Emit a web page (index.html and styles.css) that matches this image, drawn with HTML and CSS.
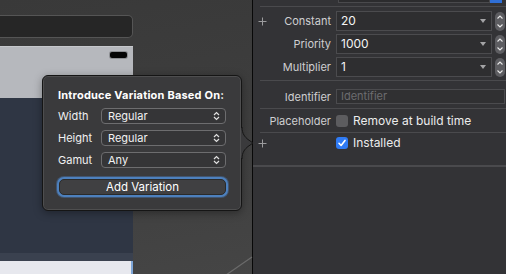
FILE: index.html
```html
<!DOCTYPE html>
<html lang="en">
<head>
    <meta charset="UTF-8">
    <title>Constraint Inspector</title>
    <link rel="stylesheet" href="styles.css">
</head>
<body>
    <div class="canvas">
        <div class="toolbar"></div>
        <div class="device">
            <div class="device-top">
                <div class="battery"></div>
            </div>
            <div class="device-body"></div>
            <div class="device-strip"></div>
            <div class="device-bottom"></div>
        </div>

        <svg class="guide" width="30" height="20" viewBox="0 0 30 20">
            <line x1="2" y1="19" x2="28" y2="1" stroke="#6b6b6b" stroke-width="1.2"/>
        </svg>

        <div class="popover">
            <div class="popover-title">Introduce Variation Based On:</div>
            <div class="variation-row">
                <span class="variation-label">Width</span>
                <div class="popup">Regular
                    <svg class="updown" width="7" height="10" viewBox="0 0 7 10"><polyline points="1,4 3.5,1.5 6,4" /><polyline points="1,6 3.5,8.5 6,6" /></svg>
                </div>
            </div>
            <div class="variation-row">
                <span class="variation-label">Height</span>
                <div class="popup">Regular
                    <svg class="updown" width="7" height="10" viewBox="0 0 7 10"><polyline points="1,4 3.5,1.5 6,4" /><polyline points="1,6 3.5,8.5 6,6" /></svg>
                </div>
            </div>
            <div class="variation-row">
                <span class="variation-label">Gamut</span>
                <div class="popup">Any
                    <svg class="updown" width="7" height="10" viewBox="0 0 7 10"><polyline points="1,4 3.5,1.5 6,4" /><polyline points="1,6 3.5,8.5 6,6" /></svg>
                </div>
            </div>
            <div class="add-btn">Add Variation</div>

            <svg class="arrow" width="14" height="32" viewBox="0 0 14 32">
                <rect x="0" y="1" width="1.6" height="30" fill="#3a3a3c"/>
                <path d="M1 0 C1 7 4 10 7 12.5 L12 16 L7 19.5 C4 22 1 25 1 32" fill="#3a3a3c" stroke="#151515" stroke-width="1"/>
            </svg>
        </div>
    </div>

    <div class="divider"></div>

    <div class="inspector">
        <div class="stub"><div class="stub-field"></div><div class="stub-blue"></div></div>
        <div class="sep"></div>

        <div class="group group-values">
            <div class="row">
                <div class="label"><svg class="plus" width="9" height="9" viewBox="0 0 9 9"><path d="M4.5 0.5 V8.5 M0.5 4.5 H8.5"/></svg>Constant</div>
                <div class="combo">20<span class="tri"></span></div>
                <div class="stepper">
                    <svg width="10" height="19" viewBox="0 0 10 19"><polyline points="2.5,6.5 5,4 7.5,6.5"/><polyline points="2.5,12.5 5,15 7.5,12.5"/></svg>
                </div>
            </div>
            <div class="row">
                <div class="label">Priority</div>
                <div class="combo">1000<span class="tri"></span></div>
                <div class="stepper">
                    <svg width="10" height="19" viewBox="0 0 10 19"><polyline points="2.5,6.5 5,4 7.5,6.5"/><polyline points="2.5,12.5 5,15 7.5,12.5"/></svg>
                </div>
            </div>
            <div class="row">
                <div class="label">Multiplier</div>
                <div class="combo">1<span class="tri"></span></div>
                <div class="stepper">
                    <svg width="10" height="19" viewBox="0 0 10 19"><polyline points="2.5,6.5 5,4 7.5,6.5"/><polyline points="2.5,12.5 5,15 7.5,12.5"/></svg>
                </div>
            </div>
        </div>
        <div class="sep"></div>

        <div class="group group-ident">
            <div class="row">
                <div class="label">Identifier</div>
                <div class="text-field">Identifier</div>
            </div>
        </div>
        <div class="sep"></div>

        <div class="group group-placeholder">
            <div class="row">
                <div class="label">Placeholder</div>
                <span class="checkbox"></span>
                <span class="check-text">Remove at build time</span>
            </div>
        </div>
        <div class="sep"></div>

        <div class="group group-installed">
            <div class="row">
                <div class="label"><svg class="plus" width="9" height="9" viewBox="0 0 9 9"><path d="M4.5 0.5 V8.5 M0.5 4.5 H8.5"/></svg></div>
                <span class="checkbox checked">
                    <svg width="12" height="12" viewBox="0 0 12 12"><path d="M3 6.3 L5.1 8.5 L9 3.4"/></svg>
                </span>
                <span class="check-text">Installed</span>
            </div>
        </div>
        <div class="sep sep-full"></div>
    </div>
</body>
</html>
```

FILE: styles.css
```css
body {
    margin: 0;
    width: 506px;
    height: 274px;
    overflow: hidden;
    display: flex;
    font-family: Inter, "Liberation Sans", sans-serif;
    font-size: 11px;
    color: #e8e8e8;
    background-color: #333336;
}

/* canvas side */

.canvas {
    position: relative;
    width: 252px;
    height: 274px;
    padding-top: 15px;
    box-sizing: border-box;
    background: linear-gradient(170deg, #393939 0%, #3e3e3e 50%, #454545 100%);
}

.toolbar {
    width: 133px;
    height: 23px;
    box-sizing: border-box;
    background-color: #262626;
    border: 1px solid #555;
    border-left: none;
    border-radius: 0 5px 5px 0;
}

.device {
    width: 133px;
    margin-top: 8px;
}

.device-top {
    height: 52px;
    background-color: #b6b8bd;
    border-top: 1px solid #c6c8cc;
    box-sizing: border-box;
    display: flex;
    justify-content: flex-end;
    padding: 5px 6px 0 0;
}

.battery {
    width: 17px;
    height: 6px;
    border-radius: 2px;
    background-color: #050505;
    box-shadow: 0 0 0 1px #8d8f93;
}

.device-body {
    height: 155px;
    background-color: #2f3644;
}

.device-strip {
    height: 8px;
    background-color: #3a414f;
}

.device-bottom {
    height: 13px;
    background-color: #e7e8ee;
    border-right: 2px solid #7ea6d8;
}

.guide {
    position: absolute;
    left: 224px;
    top: 256px;
}

/* popover */

.popover {
    position: absolute;
    left: 42px;
    top: 75px;
    width: 200px;
    height: 136px;
    box-sizing: border-box;
    padding: 12px 15px 0 15px;
    background-color: #3a3a3c;
    border: 1px solid #151515;
    border-radius: 6px;
    box-shadow: inset 0 0 0 1px rgba(255, 255, 255, 0.1), 0 2px 8px rgba(0, 0, 0, 0.35);
}

.popover-title {
    font-weight: 700;
    letter-spacing: 0.2px;
    color: #fff;
    line-height: 14px;
    margin-bottom: 6px;
}

.variation-row {
    display: flex;
    align-items: center;
    height: 16px;
    margin-bottom: 6px;
}

.variation-label {
    width: 43px;
    color: #f0f0f0;
}

.popup {
    position: relative;
    width: 125px;
    height: 16px;
    box-sizing: border-box;
    border: 1px solid #6d6d6f;
    border-radius: 4px;
    background-color: #353537;
    padding-left: 6px;
    line-height: 14px;
    color: #f2f2f2;
}

.updown {
    position: absolute;
    right: 5px;
    top: 2px;
    fill: none;
    stroke: #e0e0e0;
    stroke-width: 1.2;
}

.add-btn {
    width: 167px;
    height: 16px;
    margin: 11px 0 0 1px;
    box-sizing: border-box;
    border: 1px solid #2a2a2a;
    border-radius: 5px;
    background-color: #404042;
    box-shadow: 0 0 0 2px #4d80bd, 0 0 0 3px rgba(77, 128, 189, 0.4);
    text-align: center;
    line-height: 14px;
    font-size: 11.5px;
    color: #fff;
}

.arrow {
    position: absolute;
    left: 198px;
    top: 51px;
}

.divider {
    width: 1px;
    background-color: #080808;
}

/* inspector side */

.inspector {
    flex: 1;
    background-color: #333336;
}

.stub {
    display: flex;
    height: 3px;
    margin-left: 85px;
}

.stub-field {
    width: 152px;
    box-sizing: border-box;
    background-color: #2c2c2e;
    border: 1px solid #4a4a4d;
    border-top: none;
}

.stub-blue {
    width: 12px;
    background-color: #2f6fd6;
}

.sep {
    height: 1px;
    margin-left: 7px;
    margin-top: 3px;
    background-color: #4a4a4d;
}

.sep-full {
    height: 2px;
    margin-left: 0;
}

.group {
    display: flex;
    flex-direction: column;
    gap: 3px;
}

.group + .sep {
    margin-top: 0;
}

.group-values {
    padding: 4px 0 3px;
}

.group-ident {
    padding: 8px 0 4px;
}

.group-placeholder {
    padding: 5px 0 4px;
}

.group-installed {
    padding: 3px 0 15px;
}

.row {
    display: flex;
    align-items: center;
    line-height: 14px;
}

.label {
    width: 78px;
    margin-right: 5px;
    box-sizing: border-box;
    display: flex;
    justify-content: flex-end;
    align-items: center;
    position: relative;
    min-height: 14px;
    color: #cfcfd1;
}

.plus {
    position: absolute;
    left: 5px;
    top: 50%;
    margin-top: -4.5px;
    stroke: #9c9c9e;
    stroke-width: 1;
    fill: none;
}

.combo {
    position: relative;
    width: 156px;
    height: 20px;
    box-sizing: border-box;
    border: 1px solid #4b4b4e;
    background-color: #2e2e30;
    padding-left: 4px;
    line-height: 18px;
    font-size: 12px;
    color: #f4f4f4;
}

.tri {
    position: absolute;
    right: 5px;
    top: 7px;
    border-left: 3.5px solid transparent;
    border-right: 3.5px solid transparent;
    border-top: 4px solid #a4a4a6;
}

.stepper {
    width: 10px;
    height: 19px;
    margin-left: 3px;
    border-radius: 5px;
    background-color: #5d5d61;
}

.stepper svg {
    display: block;
    fill: none;
    stroke: #e8e8e8;
    stroke-width: 1.1;
}

.text-field {
    flex: 1;
    height: 15px;
    margin-right: 1px;
    box-sizing: border-box;
    border: 1px solid #4b4b4e;
    background-color: #303032;
    padding-left: 4px;
    line-height: 13px;
    color: #6c6c6f;
}

.checkbox {
    width: 12px;
    height: 12px;
    border-radius: 3px;
    background-color: #5c5c5f;
    margin-right: 5px;
}

.checkbox.checked {
    background-color: #2f7bf5;
}

.checkbox svg {
    display: block;
    fill: none;
    stroke: #fff;
    stroke-width: 1.6;
    stroke-linecap: round;
    stroke-linejoin: round;
}

.check-text {
    font-size: 12px;
    color: #ececec;
}
```
